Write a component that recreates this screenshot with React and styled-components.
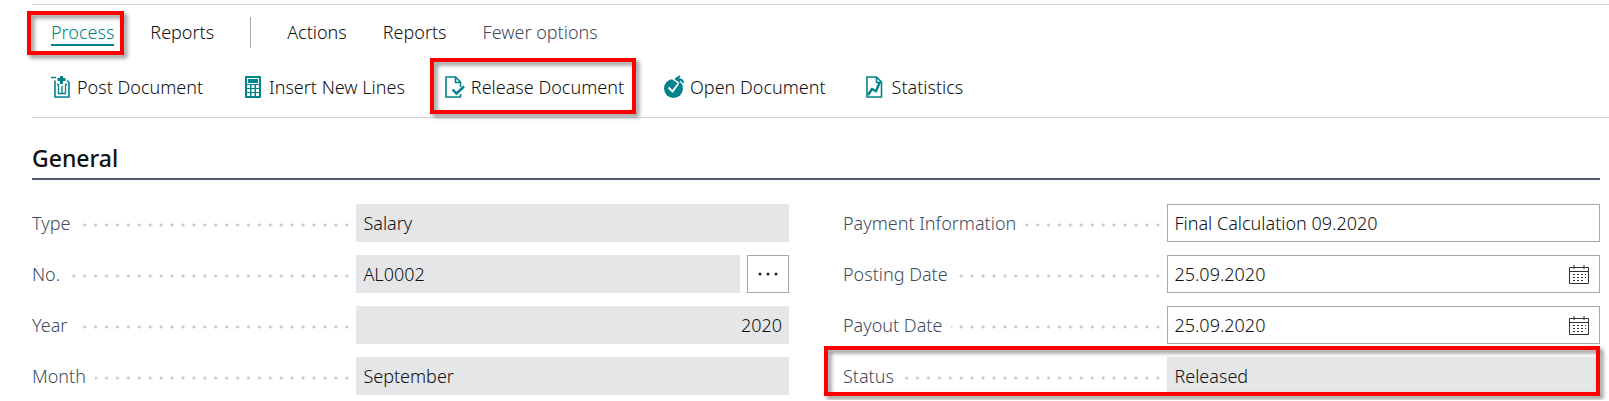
import React, { useState } from "react";
import styled, { createGlobalStyle, css } from "styled-components";

const teal = "#00838a";
const fontStack = '"Segoe UI", "Noto Sans", "Open Sans", sans-serif';

const GlobalStyle = createGlobalStyle`
  *, *::before, *::after { box-sizing: border-box; }
  body { margin: 0; background: #fff; color: #111; font-family: ${fontStack}; font-size: 18px; font-weight: 300; }
  button, input { font: inherit; color: inherit; }
`;

const Page = styled.main`
  padding: 4px 0 0 32px;
`;

const ActionBar = styled.header`
  border-top: 1px solid #d0d2d6;
  border-bottom: 1px solid #d0d2d6;
  padding-left: 19px;
`;

const Tabs = styled.nav`
  display: flex;
  align-items: center;
  gap: 36px;
  height: 54px;
`;

const Commands = styled.div`
  display: flex;
  align-items: center;
  gap: 40px;
  height: 58px;
  padding-bottom: 2px;
`;

const Divider = styled.span`
  width: 1px;
  height: 31px;
  background: #a6a9b2;
`;

const PlainButton = styled.button`
  position: relative;
  border: 0;
  padding: 0;
  background: none;
  line-height: 24px;
  white-space: nowrap;
  cursor: pointer;
`;

const tones = { active: teal, muted: "#3f4b5e", normal: "#111" };

const Tab = styled(PlainButton)`
  color: ${(p) => tones[p.$tone || "normal"]};
  border-top: 2px solid transparent;
  border-bottom: 2px solid ${(p) => (p.$tone === "active" ? teal : "transparent")};
`;

const Command = styled(PlainButton)`
  display: flex;
  align-items: center;
  gap: 6px;
`;

const Icon = styled.svg`
  width: 20px;
  height: 24px;
  flex: none;
  fill: none;
  stroke: ${teal};
  stroke-width: 2;
`;

const Highlight = styled.span`
  position: absolute;
  inset: ${(p) => p.$inset};
  border: 4px solid #fe0000;
  filter: drop-shadow(3px 3px 2px rgba(0, 0, 0, 0.45));
  pointer-events: none;
`;

const Section = styled.section`
  padding: 24px 9px 5px 0;
`;

const SectionTitle = styled.h2`
  margin: 0;
  padding-bottom: 4px;
  border-bottom: 2px solid #505c6d;
  font-size: 23px;
  font-weight: 500;
  line-height: 32px;
`;

const Columns = styled.div`
  display: grid;
  grid-template-columns: 1fr 1fr;
  column-gap: 54px;
  margin-top: 24px;
`;

const Column = styled.div`
  display: grid;
  row-gap: 13px;
  align-content: start;
`;

const FieldRow = styled.div`
  position: relative;
  display: grid;
  grid-template-columns: 3fr 4fr;
`;

const Leader = styled.div`
  display: flex;
  align-items: center;
  margin-right: 7px;
  background: radial-gradient(circle at 9px 21px, #c6c8cc 1px, transparent 2px) 0 0 / 11px 38px;
  background-repeat: round no-repeat;
`;

const Label = styled.label`
  padding-right: 9px;
  background: #fff;
  color: #3f4b5e;
  line-height: 24px;
  white-space: nowrap;
`;

const Control = styled.div`
  position: relative;
  display: flex;
  gap: 7px;
  min-width: 0;
`;

const TextBox = styled.input`
  flex: 1;
  min-width: 0;
  height: 38px;
  padding: 0 6px;
  border: 1px solid #a9a9a9;
  border-radius: 0;
  background: #fff;
  outline: 0;
  ${(p) =>
    p.readOnly &&
    css`
      border-color: #e5e6e8;
      background: #e5e6e8;
    `}
  text-align: ${(p) => (p.$numeric ? "right" : "left")};
`;

const AssistButton = styled.button`
  display: grid;
  place-items: center;
  width: 42px;
  height: 38px;
  padding: 0;
  border: 1px solid #a9a9a9;
  background: #fff;
`;

const DateButton = styled.button`
  position: absolute;
  inset: 1px 1px 1px auto;
  display: grid;
  place-items: center;
  width: 40px;
  padding: 2px 0 0;
  border: 0;
  background: none;
`;

const PostIcon = () => (
  <Icon viewBox="0 0 20 24" aria-hidden="true">
    <path d="M0 2.500h5M4 5.500v16.500h14V7.500l-2-2" strokeWidth="1.600" />
    <path d="M10.500 1v8M6.500 4.500h8" strokeWidth="3" />
    <path d="M7.500 9v9.500h7V9M11 11v7M6 9.500h2M14 9.500h2" strokeWidth="1.300" />
  </Icon>
);

const CalculatorIcon = () => (
  <Icon viewBox="0 0 20 24" aria-hidden="true">
    <rect x="2" y="1" width="16" height="22" rx="1" fill={teal} stroke="none" />
    <path d="M4 3.500h12M4.500 3v5M15.500 3v5M4 8.500h12" stroke="#fff" strokeWidth="1" />
    <path d="M4 11.500h12M4 15.500h12M4 19.500h12" stroke="#fff" strokeWidth="3" strokeDasharray="3 1.500" />
  </Icon>
);

const ReleaseIcon = () => (
  <Icon viewBox="0 0 20 24" aria-hidden="true">
    <path d="M15.500 19v3H1V2h9.500l5 5v5M10.500 2v5.500h5" strokeWidth="1.600" />
    <path d="M7.500 14.500l4 4 7.500-7" strokeWidth="2.400" />
  </Icon>
);

const OpenIcon = () => (
  <Icon viewBox="0 0 20 24" aria-hidden="true">
    <circle cx="9.500" cy="13.500" r="9.500" fill={teal} stroke="none" />
    <path d="M4.500 12.500l4 4L14 9" stroke="#fff" />
    <path d="M19 8c0-3-2-4-6-4M16 1l-4 3 4 3" stroke="#fff" strokeWidth="5" />
    <path d="M19 8c0-3-2-4-6-4M16 1l-4 3 4 3" />
  </Icon>
);

const StatisticsIcon = () => (
  <Icon viewBox="0 0 20 24" aria-hidden="true">
    <path d="M1 2h9.500l5 5v15H1zM10.500 2v5.500h5" strokeWidth="1.600" />
    <path d="M2 20l4-6 4 2 4-9" strokeWidth="2.400" />
  </Icon>
);

const CalendarIcon = () => (
  <svg width="20" height="20" viewBox="0 0 20 20" fill="none" stroke="#333" aria-hidden="true">
    <path d="M.5 2.500h19v16H.5zM.5 6.500h19M5 0v4M15 0v4" />
    <path d="M4 9.500h13M4 12.500h13M4 15.500h10" strokeDasharray="2 2" />
  </svg>
);

const DotsIcon = () => (
  <svg width="20" height="4" viewBox="0 0 20 4" fill="#212121" aria-hidden="true">
    <circle cx="2" cy="2" r="1.500" />
    <circle cx="10" cy="2" r="1.500" />
    <circle cx="18" cy="2" r="1.500" />
  </svg>
);

const commands = [
  { text: "Post Document", Glyph: PostIcon },
  { text: "Insert New Lines", Glyph: CalculatorIcon },
  { text: "Release Document", Glyph: ReleaseIcon, marked: true },
  { text: "Open Document", Glyph: OpenIcon },
  { text: "Statistics", Glyph: StatisticsIcon },
];

const leftFields = [
  { id: "type", label: "Type", value: "Salary", readOnly: true },
  { id: "no", label: "No.", value: "AL0002", readOnly: true, assist: true },
  { id: "year", label: "Year", value: "2020", readOnly: true, numeric: true },
  { id: "month", label: "Month", value: "September", readOnly: true },
];

const rightFields = [
  { id: "payment", label: "Payment Information", value: "Final Calculation 09.2020" },
  { id: "posting", label: "Posting Date", value: "25.09.2020", date: true },
  { id: "payout", label: "Payout Date", value: "25.09.2020", date: true },
  { id: "status", label: "Status", value: "Released", readOnly: true, marked: true },
];

function Field({ id, label, value, readOnly = false, numeric, assist, date, marked }) {
  const [text, setText] = useState(value);
  return (
    <FieldRow>
      <Leader>
        <Label htmlFor={id}>{label}</Label>
      </Leader>
      <Control>
        <TextBox
          id={id}
          value={text}
          readOnly={readOnly}
          $numeric={numeric}
          onChange={(e) => setText(e.target.value)}
        />
        {assist && (
          <AssistButton type="button" aria-label="Choose number">
            <DotsIcon />
          </AssistButton>
        )}
        {date && (
          <DateButton type="button" aria-label={`Pick ${label}`}>
            <CalendarIcon />
          </DateButton>
        )}
      </Control>
      {marked && <Highlight $inset="-11px 0 -1px -19px" />}
    </FieldRow>
  );
}

export default function App() {
  return (
    <Page>
      <GlobalStyle />
      <ActionBar>
        <Tabs>
          <Tab type="button" $tone="active">
            Process
            <Highlight $inset="-9px -10px -11px -24px" />
          </Tab>
          <Tab type="button">Reports</Tab>
          <Divider />
          <Tab type="button">Actions</Tab>
          <Tab type="button">Reports</Tab>
          <Tab type="button" $tone="muted">Fewer options</Tab>
        </Tabs>
        <Commands>
          {commands.map(({ text, Glyph, marked }) => (
            <Command type="button" key={text}>
              <Glyph />
              {text}
              {marked && <Highlight $inset="-17px -12px -15px -15px" />}
            </Command>
          ))}
        </Commands>
      </ActionBar>
      <Section>
        <SectionTitle>General</SectionTitle>
        <Columns>
          <Column>
            {leftFields.map((f) => (
              <Field key={f.id} {...f} />
            ))}
          </Column>
          <Column>
            {rightFields.map((f) => (
              <Field key={f.id} {...f} />
            ))}
          </Column>
        </Columns>
      </Section>
    </Page>
  );
}
